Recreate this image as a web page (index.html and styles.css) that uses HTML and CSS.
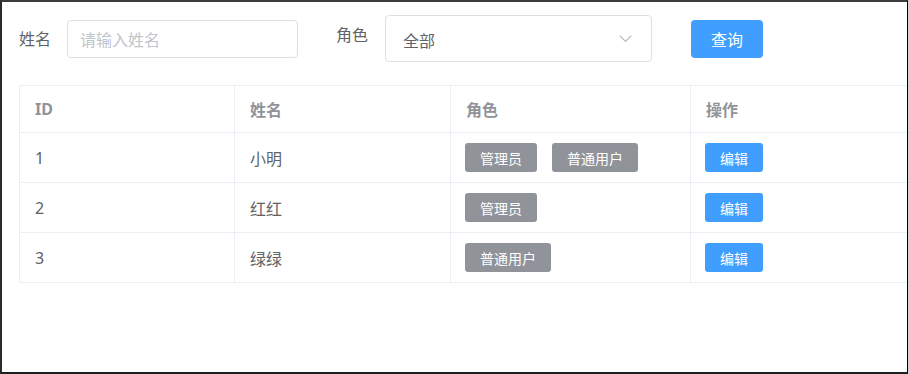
FILE: index.html
```html
<!DOCTYPE html>
<html lang="zh">
<head>
<meta charset="utf-8">
<title>用户列表</title>
<link rel="stylesheet" href="styles.css">
</head>
<body>
<div class="window">
  <div class="page">
    <form class="search">
      <label class="lbl lbl-name">姓名</label>
      <div class="input"><span class="placeholder">请输入姓名</span></div>
      <label class="lbl lbl-role">角色</label>
      <div class="select">
        <span class="select-value">全部</span>
        <svg class="chevron" width="13" height="8" viewBox="0 0 13 8"><polyline points="0.7,0.7 6.5,6.5 12.3,0.7" fill="none" stroke="#b4b8c0" stroke-width="1.1"/></svg>
      </div>
      <button type="button" class="btn-query">查询</button>
    </form>
    <div class="table">
      <div class="cell head">ID</div>
      <div class="cell head">姓名</div>
      <div class="cell head">角色</div>
      <div class="cell head">操作</div>

      <div class="cell">1</div>
      <div class="cell">小明</div>
      <div class="cell cell-tight"><span class="tag">管理员</span><span class="tag">普通用户</span></div>
      <div class="cell cell-tight"><span class="btn-edit">编辑</span></div>

      <div class="cell">2</div>
      <div class="cell">红红</div>
      <div class="cell cell-tight"><span class="tag">管理员</span></div>
      <div class="cell cell-tight"><span class="btn-edit">编辑</span></div>

      <div class="cell">3</div>
      <div class="cell">绿绿</div>
      <div class="cell cell-tight"><span class="tag">普通用户</span></div>
      <div class="cell cell-tight"><span class="btn-edit">编辑</span></div>
    </div>
  </div>
</div>
</body>
</html>
```
FILE: styles.css
```css
* { box-sizing: border-box; }
html, body {
  margin: 0;
  padding: 0;
  background: #d4d4d4;
  font-family: "Noto Sans", "Noto Sans CJK SC", sans-serif;
}
.window {
  width: 908px;
  height: 374px;
  background: #fff;
  border-top: 2px solid #3c3c3c;
  border-left: 2px solid #2a2a2a;
  border-right: 1px solid #000;
  border-bottom: 2px solid #1e1e1e;
  overflow: hidden;
}
.page {
  padding: 13px 0 0 17px;
}
.search {
  display: flex;
  align-items: flex-start;
  margin: 0;
}
.lbl {
  font-size: 16px;
  line-height: 38px;
  height: 38px;
  color: #606266;
}
.lbl-name { margin-top: 5px; margin-right: 16px; }
.lbl-role { margin-top: 1px; margin-left: 38px; margin-right: 17px; }
.input {
  margin-top: 5px;
  width: 231px;
  height: 38px;
  border: 1px solid #dcdfe6;
  border-radius: 4px;
  padding-left: 12px;
  display: flex;
  align-items: center;
  font-size: 16px;
}
.placeholder { color: #c0c4cc; }
.select {
  width: 267px;
  height: 47px;
  border: 1px solid #dcdfe6;
  border-radius: 4px;
  padding: 0 19px 0 17px;
  display: flex;
  align-items: center;
  justify-content: space-between;
  font-size: 16px;
  color: #606266;
}
.select-value { margin-top: 2px; }
.chevron { display: block; }
.btn-query {
  margin-top: 5px;
  margin-left: 39px;
  width: 72px;
  height: 38px;
  border: none;
  border-radius: 4px;
  background: #409eff;
  color: #fff;
  font-family: inherit;
  font-size: 16px;
  padding: 0;
}
.table {
  margin-top: 23px;
  display: grid;
  grid-template-columns: 215px 216px 240px 240px;
  grid-template-rows: 47px 50px 50px 50px;
  width: 912px;
  border-top: 1px solid #ebeef5;
  border-left: 1px solid #ebeef5;
}
.cell {
  border-right: 1px solid #ebeef5;
  border-bottom: 1px solid #ebeef5;
  padding-left: 15px;
  display: flex;
  align-items: center;
  gap: 15px;
  font-size: 16px;
  color: #606266;
}
.cell-tight { padding-left: 14px; }
.head {
  font-weight: bold;
  color: #909399;
}
.tag, .btn-edit {
  display: inline-flex;
  align-items: center;
  height: 29px;
  padding: 0 15px;
  border-radius: 3px;
  font-size: 14px;
  color: #fff;
}
.tag { background: #909399; }
.btn-edit { background: #409eff; }
```
